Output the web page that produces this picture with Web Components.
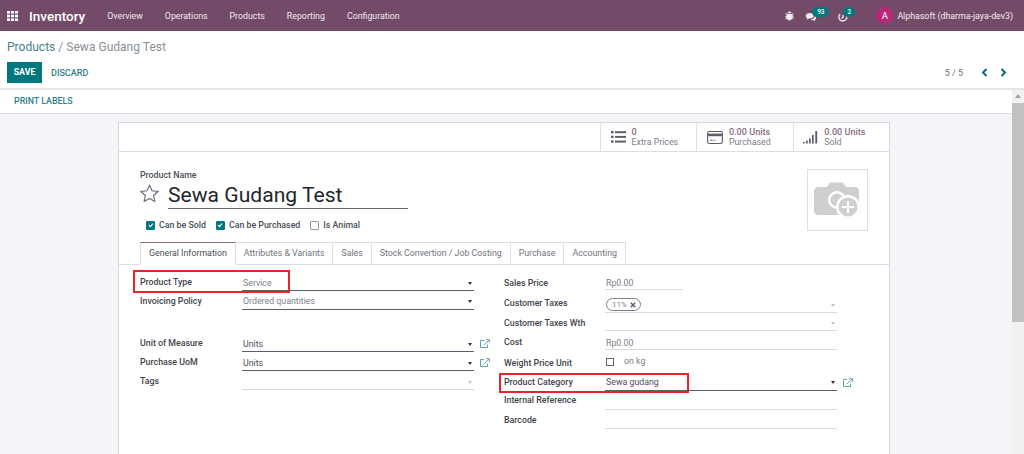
<!DOCTYPE html>
<html>
<head>
<meta charset="utf-8">
<title>Inventory</title>
<style>
  html, body { margin: 0; height: 454px; overflow: hidden; background: #fff; }
  body { font-family: Roboto, "Liberation Sans", sans-serif; font-size: 8.8px; color: #4c4c4c; }
</style>
</head>
<body>
<app-navbar></app-navbar>
<control-panel></control-panel>
<form-view>
  <stat-button slot="stats" value="0" label="Extra Prices" icon="list"></stat-button>
  <stat-button slot="stats" value="0.00 Units" label="Purchased" icon="card"></stat-button>
  <stat-button slot="stats" value="0.00 Units" label="Sold" icon="bars"></stat-button>

  <check-item slot="checks" label="Can be Sold" checked></check-item>
  <check-item slot="checks" label="Can be Purchased" checked></check-item>
  <check-item slot="checks" label="Is Animal"></check-item>

  <form-tab slot="tabs" active>General Information</form-tab>
  <form-tab slot="tabs">Attributes &amp; Variants</form-tab>
  <form-tab slot="tabs">Sales</form-tab>
  <form-tab slot="tabs">Stock Convertion / Job Costing</form-tab>
  <form-tab slot="tabs">Purchase</form-tab>
  <form-tab slot="tabs">Accounting</form-tab>

  <form-field slot="left" h="19" label="Product Type" mark="157" mark-h="23" mark-x="-7" arrow="dark" line="dark" muted>Service</form-field>
  <form-field slot="left" h="19" label="Invoicing Policy" pad="2" arrow="dark" line="dark" muted>Ordered quantities</form-field>
  <form-field slot="left" h="42" label="Unit of Measure" arrow="dark" line="dark" link>Units</form-field>
  <form-field slot="left" h="19" label="Purchase UoM" arrow="dark" line="dark" link>Units</form-field>
  <form-field slot="left" h="19" label="Tags" arrow="light"></form-field>

  <form-field slot="right" h="23" lift="7" pad="0" label="Sales Price" short muted>Rp0.00</form-field>
  <form-field slot="right" h="23" lift="10" label="Customer Taxes" arrow="light"><tax-tag>11%</tax-tag></form-field>
  <form-field slot="right" h="18" lift="8" label="Customer Taxes Wth" arrow="light"></form-field>
  <form-field slot="right" h="19" lift="8" pad="0" label="Cost" muted>Rp0.00</form-field>
  <form-field slot="right" h="21" lift="8" label="Weight Price Unit" line="none" muted><weight-unit></weight-unit></form-field>
  <form-field slot="right" h="20" lift="9" pad="2" label="Product Category" mark="190" mark-h="20" mark-x="-5" arrow="dark" line="dark" link>Sewa gudang</form-field>
  <form-field slot="right" h="19" lift="10" label="Internal Reference"></form-field>
  <form-field slot="right" h="19" lift="9" label="Barcode"></form-field>
</form-view>

<script>
class AppNavbar extends HTMLElement {
  constructor() {
    super();
    this.attachShadow({ mode: "open" });
    this.shadowRoot.innerHTML = `
      <style>
        :host { display: flex; align-items: center; height: 31px; background: #734b68; color: #fff; font-size: 8.8px; padding: 0 0 0 7px; box-sizing: border-box; }
        .apps { width: 11px; height: 10px; margin-right: 11px; display: block; }
        .brand { font-size: 13.5px; font-weight: 500; margin-right: 22px; }
        nav { display: flex; gap: 22px; color: #f0e8ee; }
        .right { margin-left: auto; display: flex; align-items: center; }
        .ico { position: relative; display: flex; }
        .badge { position: absolute; background: #00787d; color: #fff; border-radius: 5px; font-size: 6.500px; line-height: 10px; height: 10px; text-align: center; font-weight: 500; }
        .avatar { width: 17px; height: 17px; border-radius: 50%; background: #b8287a; font-size: 9.500px; line-height: 17px; text-align: center; margin: 0 4px 0 0; }
        .user { margin-right: 11px; color: #f3edf1; }
      </style>
      <svg class="apps" viewBox="0 0 11 10" fill="#fff"><rect x="0" y="0" width="3" height="2.600"/><rect x="4" y="0" width="3" height="2.600"/><rect x="8" y="0" width="3" height="2.600"/><rect x="0" y="3.700" width="3" height="2.600"/><rect x="4" y="3.700" width="3" height="2.600"/><rect x="8" y="3.700" width="3" height="2.600"/><rect x="0" y="7.400" width="3" height="2.600"/><rect x="4" y="7.400" width="3" height="2.600"/><rect x="8" y="7.400" width="3" height="2.600"/></svg>
      <span class="brand">Inventory</span>
      <nav><span>Overview</span><span>Operations</span><span>Products</span><span>Reporting</span><span>Configuration</span></nav>
      <div class="right">
        <span class="ico" style="margin-right:11px">
          <svg width="9" height="10" viewBox="0 0 9 10" fill="#f3edf1"><path d="M2.600 2.200C2.800 1 3.600.4 4.500.4s1.700.6 1.900 1.800zM2 2.900h5l1-.9.6.6-1 1v1.200h1.300v.8H7.600v.8l1.200 1.200-.6.6-1-1C6.600 8.600 5.600 9.400 4.500 9.400S2.400 8.600 1.800 7.400l-1 1-.6-.6 1.200-1.200v-.8H.1V5h1.300V3.600l-1-1L1 2z"/></svg>
        </span>
        <span class="ico" style="margin:2px 21px 0 0">
          <svg width="12" height="10" viewBox="0 0 12 11" fill="#f3edf1"><path d="M4.600 1C2.100 1 .2 2.400.2 4.100c0 1 .6 1.800 1.600 2.400-.1.600-.5 1.200-1 1.600 1 0 2-.4 2.700-1 .3.100.7.100 1.100.100 2.500 0 4.400-1.400 4.400-3.100S7.100 1 4.600 1z"/><path d="M10.200 4.300c.1 2-2 3.700-4.700 3.800.7.700 1.900 1.100 3 1 .6.500 1.500.9 2.400.9-.4-.4-.7-.9-.8-1.400.9-.5 1.400-1.300 1.400-2.100 0-1-.5-1.700-1.300-2.200z"/></svg>
          <span class="badge" style="left:7px;top:-5px;width:17px">93</span>
        </span>
        <span class="ico" style="margin:2px 28px 0 0">
          <svg width="10" height="10" viewBox="0 0 10 10" fill="none" stroke="#f3edf1" stroke-width="1.300"><path d="M6.800 1.500A4 4 0 1 1 2.200 2"/><path d="M5 3v2.400L3.500 6.500"/></svg>
          <span class="badge" style="left:5px;top:-5px;width:12px">2</span>
        </span>
        <span class="avatar">A</span>
        <span class="user">Alphasoft (dharma-jaya-dev3)</span>
      </div>`;
  }
}
customElements.define("app-navbar", AppNavbar);

class ControlPanel extends HTMLElement {
  constructor() {
    super();
    this.attachShadow({ mode: "open" });
    this.shadowRoot.innerHTML = `
      <style>
        :host { display: block; height: 59px; box-sizing: border-box; border-bottom: 2px solid #e6e6e6; padding: 0 0 0 7px; background: #fff; }
        .crumb { font-size: 12.050px; line-height: 16px; padding-top: 8px; color: #8a8f98; }
        .crumb b { font-weight: 400; color: #4b8188; }
        .row { display: flex; align-items: center; margin-top: 7px; height: 21px; }
        .save { width: 35px; height: 21px; background: #00787d; color: #fff; font-weight: 700; font-size: 8.800px; line-height: 21px; text-align: center; box-sizing: border-box; }
        .discard { color: #2f7f87; font-weight: 500; font-size: 9px; margin-left: 9px; }
        .pager { margin-left: auto; display: flex; align-items: center; color: #6a7078; font-size: 9px; margin-right: 17px; }
        .pager svg { display: block; }
      </style>
      <div class="crumb"><b>Products</b> / Sewa Gudang Test</div>
      <div class="row">
        <span class="save">SAVE</span><span class="discard">DISCARD</span>
        <span class="pager">5 / 5
          <svg style="margin-left:18px" width="7" height="9" viewBox="0 0 7 9" fill="none" stroke="#0b6c78" stroke-width="2"><path d="M5.500 1 2 4.500 5.500 8"/></svg>
          <svg style="margin-left:12px" width="7" height="9" viewBox="0 0 7 9" fill="none" stroke="#0b6c78" stroke-width="2"><path d="M1.500 1 5 4.500 1.500 8"/></svg>
        </span>
      </div>`;
  }
}
customElements.define("control-panel", ControlPanel);

class StatButton extends HTMLElement {
  constructor() {
    super();
    this.attachShadow({ mode: "open" });
  }
  connectedCallback() {
    const icons = {
      list: `<svg width="15" height="12" viewBox="0 0 15 12" fill="#5a5f6b"><rect y="0" width="2.600" height="2.300"/><rect x="4" y=".2" width="11" height="2"/><rect y="4.700" width="2.600" height="2.300"/><rect x="4" y="4.900" width="11" height="2"/><rect y="9.400" width="2.600" height="2.300"/><rect x="4" y="9.600" width="11" height="2"/></svg>`,
      card: `<svg width="16" height="13" viewBox="0 0 17 14"><rect x=".6" y=".6" width="15.800" height="12.800" rx="1.500" fill="none" stroke="#5a5f6b" stroke-width="1.200"/><rect x="1" y="2.800" width="15" height="2.800" fill="#5a5f6b"/><rect x="3" y="9.500" width="3" height="1" fill="#5a5f6b"/><rect x="7" y="9.500" width="2" height="1" fill="#5a5f6b"/></svg>`,
      bars: `<svg width="15" height="14" viewBox="0 0 15 14" fill="#5a5f6b"><rect x="0" y="12" width="1.700" height="1.500"/><rect x="3" y="10.500" width="1.700" height="3"/><rect x="6" y="8.500" width="1.700" height="5"/><rect x="9" y="5" width="1.700" height="8.500"/><rect x="12.300" y="1" width="1.900" height="12.500"/></svg>`
    };
    this.shadowRoot.innerHTML = `
      <style>
        :host { display: flex; align-items: center; gap: 6px; width: 96.300px; height: 28px; box-sizing: border-box; border-left: 1px solid #dedde4; padding-left: 9.500px; font-size: 9.100px; line-height: 10.500px; }
        .v { color: #8a6b82; font-weight: 500; }
        .l { color: #7b808a; font-size: 8.800px; }
        svg { display: block; }
      </style>
      ${icons[this.getAttribute("icon")]}
      <div class="t"><div class="v">${this.getAttribute("value")}</div><div class="l">${this.getAttribute("label")}</div></div>`;
  }
}
customElements.define("stat-button", StatButton);

class CheckItem extends HTMLElement {
  constructor() {
    super();
    this.attachShadow({ mode: "open" });
  }
  connectedCallback() {
    const on = this.hasAttribute("checked");
    this.shadowRoot.innerHTML = `
      <style>
        :host { display: inline-flex; align-items: center; gap: 4px; font-size: 8.800px; color: #4a4f57; font-weight: 500; }
        .box { width: 7px; height: 7px; border: 1px solid ${on ? "#00787d" : "#9a9a9a"}; background: ${on ? "#00787d" : "#fff"}; display: flex; align-items: center; justify-content: center; border-radius: 1px; }
      </style>
      <span class="box">${on ? `<svg width="6" height="6" viewBox="0 0 6 6" fill="none" stroke="#fff" stroke-width="1.100"><path d="M1 3.200 2.500 4.600 5 1.500"/></svg>` : ""}</span>
      <span>${this.getAttribute("label")}</span>`;
  }
}
customElements.define("check-item", CheckItem);

class FormTab extends HTMLElement {
  constructor() {
    super();
    this.attachShadow({ mode: "open" });
  }
  connectedCallback() {
    const on = this.hasAttribute("active");
    this.shadowRoot.innerHTML = `
      <style>
        :host { display: block; box-sizing: border-box; height: 23px; padding: 0 8px; line-height: 21px; font-size: 8.800px; white-space: nowrap;
          border: 1px solid #dedde4; border-left-width: ${on ? 1 : 0}px; margin-bottom: -1px;
          color: ${on ? "#4a4f57" : "#6f747d"};
          ${on ? "border-top-color: #8a6b82; border-bottom-color: #fff; background: #fff;" : ""} }
      </style>
      <slot></slot>`;
  }
}
customElements.define("form-tab", FormTab);

class TaxTag extends HTMLElement {
  constructor() {
    super();
    this.attachShadow({ mode: "open" });
    this.shadowRoot.innerHTML = `
      <style>
        :host { display: inline-flex; align-items: center; gap: 3px; height: 13px; box-sizing: border-box; border: 1px solid #7d8087; border-radius: 7px; padding: 0 4px 0 5px; font-size: 8px; color: #7b808a; }
      </style>
      <slot></slot>
      <svg width="6" height="6" viewBox="0 0 6 6" stroke="#5a5f6b" stroke-width="1.500"><path d="M.8.8l4.400 4.400M5.200.8.800 5.200"/></svg>`;
  }
}
customElements.define("tax-tag", TaxTag);

class WeightUnit extends HTMLElement {
  constructor() {
    super();
    this.attachShadow({ mode: "open" });
    this.shadowRoot.innerHTML = `
      <style>
        :host { display: inline-flex; align-items: center; gap: 10px; color: #7b808a; font-size: 8.800px; }
        i { width: 6px; height: 6px; border: 1px solid #666; display: block; }
      </style>
      <i></i><span style="position:relative;top:-1px">on kg</span>`;
  }
}
customElements.define("weight-unit", WeightUnit);

class FormField extends HTMLElement {
  constructor() {
    super();
    this.attachShadow({ mode: "open" });
  }
  connectedCallback() {
    const h = this.getAttribute("h") || 19;
    const lift = this.getAttribute("lift") || 9;
    const pad = this.getAttribute("pad") || 1;
    const line = this.getAttribute("line");
    const arrow = this.getAttribute("arrow");
    const mark = this.getAttribute("mark");
    const lineColor = line === "dark" ? "#5a5f6b" : line === "none" ? "transparent" : "#d9d9d9";
    const arrowColor = arrow === "dark" ? "#333" : "#c4c4c4";
    this.shadowRoot.innerHTML = `
      <style>
        :host { display: grid; position: relative; grid-template-columns: var(--label-w, 102px) 232px 20px; height: ${h}px; font-size: 8.800px; color: #4a4f57; box-sizing: border-box; }
        .label { align-self: end; font-weight: 500; line-height: 12px; margin-bottom: ${lift - 6}px; color: #3f444c; white-space: nowrap; }
        .value { display: flex; align-items: flex-end; justify-content: space-between; box-sizing: border-box; border-bottom: 1.200px solid ${lineColor}; padding: 0 1px ${pad}px 1px; line-height: 12px; color: ${this.hasAttribute("muted") ? "#7b808a" : "#4a4f57"}; ${this.hasAttribute("short") ? "width: 78px;" : ""} }
        .caret { width: 0; height: 0; border: 2.500px solid transparent; border-top: 3px solid ${arrowColor}; border-bottom: 0; margin: 0 1px 4px 0; flex: none; }
        .link { align-self: end; margin: 0 0 3px 6px; display: block; }
        .mark { position: absolute; left: ${this.getAttribute("mark-x")}px; bottom: -2px; height: ${this.getAttribute("mark-h")}px; box-sizing: border-box; border: 2px solid #e8232d; pointer-events: none; }
      </style>
      <span class="label">${this.getAttribute("label")}</span>
      <div class="value"><span><slot></slot></span>${arrow ? `<i class="caret"></i>` : ""}</div>
      ${this.hasAttribute("link") ? `<svg class="link" width="10" height="10" viewBox="0 0 10 10" fill="none" stroke="#5fa3ad" stroke-width="1"><path d="M7.500 5.500v3h-7v-7h3.500"/><path d="M4 6l4.800-4.800M6 .7h3.300V4"/></svg>` : ""}
      ${mark ? `<div class="mark" style="width:${mark}px"></div>` : ""}`;
  }
}
customElements.define("form-field", FormField);

class FormView extends HTMLElement {
  constructor() {
    super();
    this.attachShadow({ mode: "open" });
    this.shadowRoot.innerHTML = `
      <style>
        :host { display: flex; height: 364px; overflow: hidden; }
        .scroll { flex: 1; min-width: 0; background: #f4f5f9; }
        .print { height: 24px; box-sizing: border-box; background: #fff; border-bottom: 1px solid #dfdfe3; padding-left: 14px; line-height: 22px; color: #2f7f87; font-weight: 500; font-size: 8.850px; }
        .sheet { width: 772px; margin: 8px 0 0 118px; background: #fff; border: 1px solid #d9d7e0; border-bottom: 0; box-sizing: border-box; height: 400px; }
        .stats { display: flex; justify-content: flex-end; border-bottom: 1px solid #dedde4; height: 28px; }
        .head { display: flex; justify-content: space-between; padding: 17px 21px 0 21px; height: 90px; box-sizing: border-box; }
        .cap { font-size: 8.800px; font-weight: 500; color: #4a4f57; line-height: 12px; }
        .title { display: flex; align-items: flex-end; gap: 9px; margin-top: 0; }
        .star { display: block; margin: 0 0 7px 0; }
        .name { width: 240px; font-size: 21.100px; line-height: 28px; color: #22262c; border-bottom: 1.200px solid #666a75; height: 27px; }
        .checks { display: flex; gap: 10px; margin: 11px 0 0 6px; }
        .photo { width: 61px; height: 62px; box-sizing: border-box; border: 1px solid #e0e0e0; display: flex; align-items: center; justify-content: center; }
        .tabs { display: flex; padding-left: 21px; border-bottom: 1px solid #dedde4; height: 22px; }
        .cols { display: flex; padding: 2px 0 0 21px; }
        .left { width: 354px; margin-right: 10px; padding-top: 5px; }
        .right { width: 353px; --label-w: 101px; }
        .bar { width: 12px; background: #f1f1f1; flex: none; }
        .bar .up { width: 0; height: 0; border: 3px solid transparent; border-bottom: 4px solid #a3a3a3; border-top: 0; margin: 4px auto 5px; }
        .bar .thumb { width: 12px; height: 219px; background: #c1c1c1; }
      </style>
      <div class="scroll">
        <div class="print">PRINT LABELS</div>
        <div class="sheet">
          <div class="stats"><slot name="stats"></slot></div>
          <div class="head">
            <div>
              <div class="cap">Product Name</div>
              <div class="title">
                <svg class="star" width="19" height="18" viewBox="0 0 19 18" fill="none" stroke="#6a6f79" stroke-width="1.200"><path d="M9.500 1.300l2.500 5.500 6 .7-4.400 4 1.200 5.900-5.300-3-5.300 3 1.200-5.900-4.400-4 6-.7z"/></svg>
                <div class="name">Sewa Gudang Test</div>
              </div>
              <div class="checks"><slot name="checks"></slot></div>
            </div>
            <div class="photo">
              <svg width="47" height="37" viewBox="0 0 47 37"><path d="M4 5h9l3-4.500h13L32 5h9c2 0 4 2 4 4v20c0 2-2 4-4 4H4c-2 0-4-2-4-4V9c0-2 2-4 4-4z" fill="#cfcfcf"/><circle cx="23" cy="18" r="9" fill="#fff"/><circle cx="23" cy="18" r="6.500" fill="#cfcfcf"/><circle cx="34" cy="25" r="12" fill="#fff"/><circle cx="34" cy="25" r="9.500" fill="#cfcfcf"/><path d="M34 19v12M28 25h12" stroke="#fff" stroke-width="2"/></svg>
            </div>
          </div>
          <div class="tabs"><slot name="tabs"></slot></div>
          <div class="cols">
            <div class="left"><slot name="left"></slot></div>
            <div class="right"><slot name="right"></slot></div>
          </div>
        </div>
      </div>
      <div class="bar"><div class="up"></div><div class="thumb"></div></div>`;
  }
}
customElements.define("form-view", FormView);
</script>
</body>
</html>
